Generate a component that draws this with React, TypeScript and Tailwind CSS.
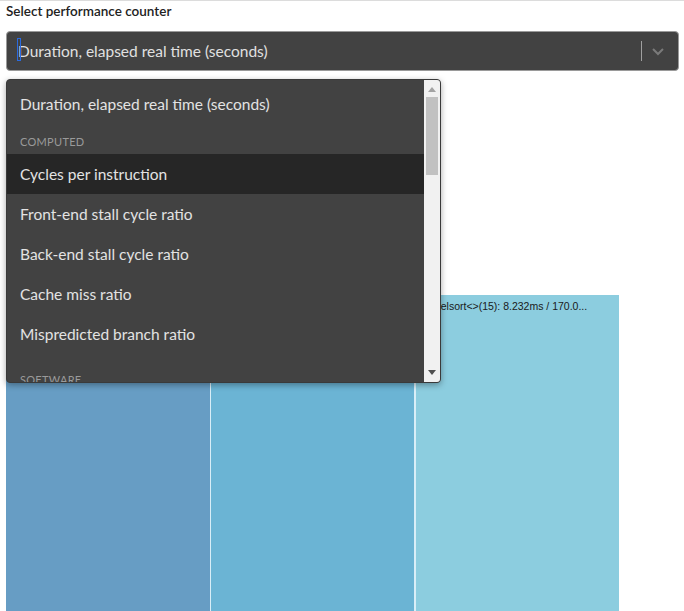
import React from "react";

const sans = { fontFamily: 'Lato, "Noto Sans", sans-serif' };

function Item({ label, active }: { label: string; active?: boolean }) {
  return (
    <div
      className={`h-[40px] flex items-center pl-[13px] pt-[1px] text-[15.5px] text-[#e3e3e3] ${active ? "bg-[#262626]" : ""}`}
    >
      {label}
    </div>
  );
}

function Header({ label, extra }: { label: string; extra?: boolean }) {
  return (
    <div className={`h-[30px] flex items-center pl-[13px] pt-[6px] text-[11px] tracking-[0.3px] text-[#9a9a9a] ${extra ? "mt-[8px]" : ""}`}>
      {label}
    </div>
  );
}

export default function App() {
  return (
    <div className="relative w-[684px] h-[611px] overflow-hidden bg-white border-t border-[#dcdcdc]" style={sans}>
      <div className="px-[6px] pt-[1px] h-[20px] flex items-center text-[13.5px] font-semibold text-[#222]">
        Select performance counter
      </div>
      <div className="mx-[6px] mt-[10px] h-[40px] w-[673px] rounded-[4px] border border-[#9a9a9a] bg-[#424242] flex items-center">
        <div className="relative flex-1 pl-[11px] pt-[1px] text-[15.5px] text-[#e0e0e0]">
          <span className="absolute left-[10px] top-[-1px] w-[4px] h-[23px] border border-[#2a6be0]" />
          Duration, elapsed real time (seconds)
        </div>
        <div className="w-px h-[20px] bg-[#a0a0a0] mr-[9px]" />
        <svg width="14" height="10" viewBox="0 0 14 10" className="mr-[13px]">
          <path d="M2 3 L7 8 L12 3" stroke="#7a7a7a" strokeWidth="2" fill="none" />
        </svg>
      </div>

      <div className="mt-[224px] ml-[6px] flex h-[400px]">
        <div className="w-[204px] bg-[#679dc4]" />
        <div className="w-px bg-[#d9eef7]" />
        <div className="w-[203px] bg-[#6bb4d4]" />
        <div className="w-[2px] bg-[#d9eef7]" />
        <div className="w-[203px] bg-[#8ccddf] pt-[4px] pl-[7px] text-[10.5px] text-[#1a1a1a] whitespace-nowrap overflow-hidden" style={{ fontFamily: '"Liberation Sans", Arial, sans-serif' }}>
          Tunelsort&lt;&gt;(15): 8.232ms / 170.0...
        </div>
      </div>

      <div className="absolute left-[6px] top-[78px] w-[435px] h-[304px] rounded-[4px] border border-[#3a3a3a] bg-[#424242] shadow-[0_2px_6px_rgba(0,0,0,0.35)] flex overflow-hidden">
        <div className="flex-1 pt-[4px] overflow-hidden">
          <Item label="Duration, elapsed real time (seconds)" />
          <Header label="COMPUTED" />
          <Item label="Cycles per instruction" active />
          <Item label="Front-end stall cycle ratio" />
          <Item label="Back-end stall cycle ratio" />
          <Item label="Cache miss ratio" />
          <Item label="Mispredicted branch ratio" />
          <Header label="SOFTWARE" extra />
          <Item label="Page faults" />
        </div>
        <div className="w-[16px] bg-[#f1f1f1] flex flex-col items-center">
          <svg width="10" height="16" viewBox="0 0 10 16" className="mt-[1px]">
            <path d="M1 11 L5 6 L9 11 Z" fill="#a3a3a3" />
          </svg>
          <div className="w-[12px] h-[78px] bg-[#c1c1c1]" />
          <div className="flex-1" />
          <svg width="10" height="16" viewBox="0 0 10 16" className="mb-[1px]">
            <path d="M1 5 L5 10 L9 5 Z" fill="#505050" />
          </svg>
        </div>
      </div>
    </div>
  );
}
